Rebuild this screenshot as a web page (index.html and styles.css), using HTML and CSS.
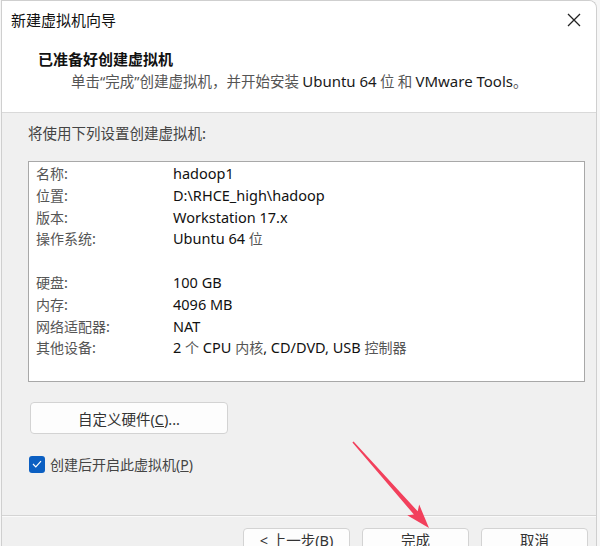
FILE: index.html
```html
<!DOCTYPE html>
<html lang="zh">
<head>
<meta charset="utf-8">
<link rel="stylesheet" href="styles.css">
</head>
<body>
<div class="window">
  <div class="titlebar">
    <span class="title">新建虚拟机向导</span>
    <svg class="close" width="14" height="14" viewBox="0 0 14 14"><path d="M1 1 L13 13 M13 1 L1 13" stroke="#222" stroke-width="1.3" fill="none"/></svg>
  </div>
  <div class="header">
    <div class="h-title">已准备好创建虚拟机</div>
    <div class="h-sub">单击<span class="q">“</span>完成<span class="q">”</span>创建虚拟机，并开始安装 <span class="lat">Ubuntu 64</span> 位 和 <span class="lat">VMware Tools</span>。</div>
  </div>
  <div class="body">
    <div class="intro">将使用下列设置创建虚拟机:</div>
    <div class="listbox">
      <div class="row"><span class="k">名称:</span><span class="v">hadoop1</span></div>
      <div class="row"><span class="k">位置:</span><span class="v">D:\RHCE_high\hadoop</span></div>
      <div class="row"><span class="k">版本:</span><span class="v">Workstation 17.x</span></div>
      <div class="row"><span class="k">操作系统:</span><span class="v">Ubuntu 64 <span class="cj">位</span></span></div>
      <div class="row"></div>
      <div class="row"><span class="k">硬盘:</span><span class="v">100 GB</span></div>
      <div class="row"><span class="k">内存:</span><span class="v">4096 MB</span></div>
      <div class="row"><span class="k">网络适配器:</span><span class="v">NAT</span></div>
      <div class="row"><span class="k">其他设备:</span><span class="v">2 <span class="cj">个</span> CPU <span class="cj">内核</span>, CD/DVD, USB <span class="cj">控制器</span></span></div>
    </div>
    <button class="btn hw"><span>自定义硬件<span class="lt">(<u>C</u>)...</span></span></button>
    <label class="check"><span class="box"><svg width="10" height="8" viewBox="0 0 10 8"><path d="M1 4 L3.8 6.8 L9 1.2" stroke="#fff" stroke-width="1.2" fill="none"/></svg></span><span>创建后开启此虚拟机<span class="lt">(<u>P</u>)</span></span></label>
  </div>
  <div class="footer">
    <button class="btn fb"><span><span class="lt">&lt;&nbsp;</span>上一步<span class="lt">(B)</span></span></button>
    <button class="btn fb"><span>完成</span></button>
    <button class="btn fb"><span>取消</span></button>
  </div>
</div>
<svg class="arrow" width="600" height="546" viewBox="0 0 600 546">
  <polygon points="353.6,441.5 417.7,511.3 419.2,504.6 429,528 407.2,515.2 413.9,514.5 352.4,442.5" fill="#f2405c"/>
</svg>
</body>
</html>
```
FILE: styles.css
```css
html, body {
  margin: 0;
  padding: 0;
  background: #f6f6f6;
  width: 600px;
  height: 546px;
  overflow: hidden;
  font-family: "Noto Sans", "Noto Sans CJK SC", sans-serif;
  color: #1a1a1a;
}
.window {
  position: relative;
  width: 594px;
  height: 560px;
  margin-left: 1px;
  border: 1px solid #cfcfcf;
  border-bottom: none;
  border-top-right-radius: 8px;
  background: #f0f0f0;
  overflow: hidden;
}
.titlebar {
  height: 37px;
  background: #fff;
  display: flex;
  align-items: center;
  justify-content: space-between;
  padding: 0 15px 0 9px;
}
.title {
  font-family: "Noto Sans CJK SC", sans-serif;
  font-size: 15px;
  color: #111;
}
.header {
  background: #fff;
  border-bottom: 1px solid #d9d9d9;
  box-sizing: border-box;
  height: 75px;
}
.h-title {
  font-family: "Noto Sans CJK SC", sans-serif;
  font-weight: bold;
  font-size: 15px;
  padding-left: 36px;
  padding-top: 10px;
  line-height: 22px;
  color: #111;
}
.h-sub {
  font-family: "Noto Sans CJK SC", sans-serif;
  font-size: 14.5px;
  color: #555;
  padding-left: 69px;
  line-height: 22px;
}
.q { font-family: "Noto Sans", sans-serif; }
.lat { font-family: "Noto Sans", sans-serif; font-size: 15px; color: #1a1a1a; }
.lt { font-family: "Noto Sans", sans-serif; }
.body {
  padding: 9px 0 0 26px;
  height: 403px;
  box-sizing: border-box;
  border-bottom: 1px solid #d4d4d4;
}
.intro {
  font-family: "Noto Sans CJK SC", sans-serif;
  font-size: 14.5px;
  color: #444;
  line-height: 22px;
}
.listbox {
  margin-top: 17px;
  width: 557px;
  height: 221px;
  box-sizing: border-box;
  background: #fff;
  border: 1px solid #a8a8a8;
  padding: 1px 0 0 7px;
}
.row {
  display: flex;
  height: 21.8px;
  line-height: 21.8px;
}
.k {
  width: 137px;
  font-family: "Noto Sans CJK SC", sans-serif;
  font-size: 14px;
  color: #555;
}
.v {
  font-family: "Noto Sans", sans-serif;
  font-size: 14.5px;
  color: #111;
}
.cj { font-family: "Noto Sans CJK SC", sans-serif; font-size: 14px; color: #555; }
.btn {
  display: flex;
  align-items: center;
  justify-content: center;
  background: #fdfdfd;
  border: 1px solid #d3d3d3;
  border-radius: 4px;
  font-family: "Noto Sans CJK SC", "Noto Sans", sans-serif;
  font-size: 14.5px;
  color: #333;
  padding: 0;
  box-sizing: border-box;
}
.hw {
  margin-top: 20px;
  margin-left: 2px;
  width: 198px;
  height: 32px;
}
.check {
  display: flex;
  align-items: center;
  margin-top: 20px;
  margin-left: 1px;
  font-family: "Noto Sans CJK SC", sans-serif;
  font-size: 14px;
  color: #444;
  gap: 5px;
}
.box {
  width: 16px;
  height: 17px;
  border-radius: 3px;
  background: #0b5fc2;
  display: flex;
  align-items: center;
  justify-content: center;
}
.footer {
  display: flex;
  justify-content: flex-end;
  gap: 12px;
  padding: 11px 8px 0 0;
  border-top: 1px solid #fafafa;
}
.fb {
  width: 107px;
  height: 32px;
  align-items: flex-start;
  padding-top: 2px;
  line-height: 18px;
}
.arrow {
  position: absolute;
  left: 0;
  top: 0;
  pointer-events: none;
}
```
